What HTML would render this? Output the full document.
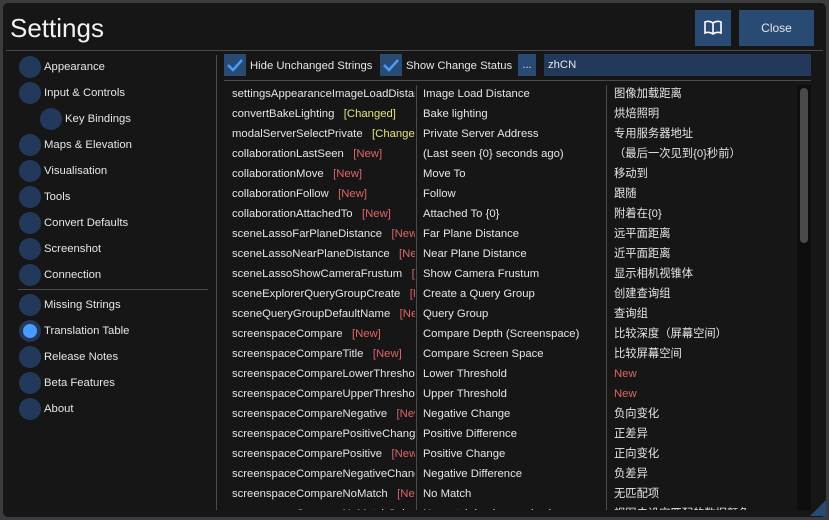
<!DOCTYPE html>
<html><head><meta charset="utf-8"><style>
*{margin:0;padding:0;box-sizing:border-box}
body{width:829px;height:520px;background:#3c3c3e;overflow:hidden;font-family:"Liberation Sans","Noto Sans CJK SC",sans-serif;color:#e6e6e6;font-size:11.3px;position:relative}
.win{position:absolute;left:3px;top:3px;width:823px;height:514px;background:#161617;border-radius:5px}
.title{position:absolute;left:10px;top:13px;font-size:26px;color:#f2f2f2}
.hl{position:absolute;left:6px;top:50px;width:817px;height:1px;background:#4a4a52}
.btn{position:absolute;background:#284a73;color:#e6e6e6;display:flex;align-items:center;justify-content:center;font-size:12px}
.side{position:absolute;left:19px;top:1px}
.it{position:absolute;left:0;height:22px;display:flex;align-items:center;white-space:nowrap}
.c{width:22px;height:22px;border-radius:50%;background:#23395b;margin-right:3px;flex:none}
.sel{background:#23395b;display:flex;align-items:center;justify-content:center}
.sel::after{content:"";width:14px;height:14px;border-radius:50%;background:#4a9bff}
.cb{position:absolute;top:54px;width:22px;height:22px;background:#284a73}
.row{position:absolute;height:20px;line-height:20px;white-space:nowrap;overflow:hidden}
.y{color:#e6e07a}.r{color:#e06565}
#t{position:absolute;left:0;top:0;width:829px;height:510px;overflow:hidden}
</style></head><body>
<div class="win"></div>
<div class="title">Settings</div>
<div class="hl"></div>
<div class="btn" style="left:695px;top:10px;width:36px;height:36px"><svg width="20" height="16" viewBox="0 0 20 16"><path d="M10 3C7 1 4 1 2 2v11c2-1 5-1 8 1 3-2 6-2 8-1V2c-2-1-5-1-8 1zM10 3v11" fill="none" stroke="#fff" stroke-width="1.6"/></svg></div>
<div class="btn" style="left:739px;top:10px;width:75px;height:36px">Close</div>
<div style="position:absolute;left:216px;top:55px;width:1px;height:455px;background:#4a4a52"></div>
<div style="position:absolute;left:18px;top:289px;width:190px;height:1px;background:#4a4a52"></div>
<div class="side">
<div class="it" style="top:55px"><span class="c"></span>Appearance</div>
<div class="it" style="top:81px"><span class="c"></span>Input &amp; Controls</div>
<div class="it" style="top:107px;left:21px"><span class="c"></span>Key Bindings</div>
<div class="it" style="top:133px"><span class="c"></span>Maps &amp; Elevation</div>
<div class="it" style="top:159px"><span class="c"></span>Visualisation</div>
<div class="it" style="top:185px"><span class="c"></span>Tools</div>
<div class="it" style="top:211px"><span class="c"></span>Convert Defaults</div>
<div class="it" style="top:237px"><span class="c"></span>Screenshot</div>
<div class="it" style="top:263px"><span class="c"></span>Connection</div>
<div class="it" style="top:293px"><span class="c"></span>Missing Strings</div>
<div class="it" style="top:319px"><span class="c sel"></span>Translation Table</div>
<div class="it" style="top:345px"><span class="c"></span>Release Notes</div>
<div class="it" style="top:371px"><span class="c"></span>Beta Features</div>
<div class="it" style="top:397px"><span class="c"></span>About</div>
</div>
<div class="cb" style="left:224px"><svg width="22" height="22"><path d="M4 11l5 5 9-10" fill="none" stroke="#4a9bff" stroke-width="2.5"/></svg></div>
<div class="row" style="left:250px;top:56px">Hide Unchanged Strings</div>
<div class="cb" style="left:380px"><svg width="22" height="22"><path d="M4 11l5 5 9-10" fill="none" stroke="#4a9bff" stroke-width="2.5"/></svg></div>
<div class="row" style="left:406px;top:56px">Show Change Status</div>
<div class="btn" style="left:518px;top:54px;width:18px;height:22px;font-size:11px">...</div>
<div style="position:absolute;left:544px;top:54px;width:267px;height:22px;background:#23395b;padding-left:4px;line-height:22px">zhCN</div>
<div style="position:absolute;left:224px;top:80px;width:587px;height:1px;background:#4a4a52"></div>
<div style="position:absolute;left:416px;top:85px;width:1px;height:425px;background:#4a4a52"></div>
<div style="position:absolute;left:606px;top:85px;width:1px;height:425px;background:#4a4a52"></div>
<div style="position:absolute;left:797px;top:85px;width:14px;height:425px;background:#0e0e0f"></div>
<div style="position:absolute;left:800px;top:88px;width:8px;height:155px;background:#4a4a4c;border-radius:4px"></div>
<div id="t"></div>
<div style="position:absolute;left:810px;top:500px;width:0;height:0;border-left:16px solid transparent;border-bottom:16px solid #284a73"></div>
<script>
var d=[["settingsAppearanceImageLoadDistance","","Image Load Distance","图像加载距离"],
["convertBakeLighting","y[Changed]","Bake lighting","烘焙照明"],
["modalServerSelectPrivate","y[Changed]","Private Server Address","专用服务器地址"],
["collaborationLastSeen","r[New]","(Last seen {0} seconds ago)","（最后一次见到{0}秒前）"],
["collaborationMove","r[New]","Move To","移动到"],
["collaborationFollow","r[New]","Follow","跟随"],
["collaborationAttachedTo","r[New]","Attached To {0}","附着在{0}"],
["sceneLassoFarPlaneDistance","r[New]","Far Plane Distance","远平面距离"],
["sceneLassoNearPlaneDistance","r[New]","Near Plane Distance","近平面距离"],
["sceneLassoShowCameraFrustum","r[New]","Show Camera Frustum","显示相机视锥体"],
["sceneExplorerQueryGroupCreate","r[New]","Create a Query Group","创建查询组"],
["sceneQueryGroupDefaultName","r[New]","Query Group","查询组"],
["screenspaceCompare","r[New]","Compare Depth (Screenspace)","比较深度（屏幕空间）"],
["screenspaceCompareTitle","r[New]","Compare Screen Space","比较屏幕空间"],
["screenspaceCompareLowerThreshold","r[New]","Lower Threshold","rNew"],
["screenspaceCompareUpperThreshold","r[New]","Upper Threshold","rNew"],
["screenspaceCompareNegative","r[New]","Negative Change","负向变化"],
["screenspaceComparePositiveChange","r[New]","Positive Difference","正差异"],
["screenspaceComparePositive","r[New]","Positive Change","正向变化"],
["screenspaceCompareNegativeChange","r[New]","Negative Difference","负差异"],
["screenspaceCompareNoMatch","r[New]","No Match","无匹配项"],
["screenspaceCompareNoMatchColor","r[New]","No match background color","视图未设定匹配的数据颜色"]];
var h="";
function sp(s){if(!s)return"";return s[0]=="y"||s[0]=="r"?'<span class="'+s[0]+'">'+s.slice(1)+'</span>':s}
d.forEach(function(r,i){var y=84+i*20;
h+='<div class="row" style="left:232px;top:'+y+'px;width:183px">'+r[0]+'&nbsp;&nbsp;&nbsp;'+sp(r[1])+'</div>';
h+='<div class="row" style="left:423px;top:'+y+'px;width:182px">'+r[2]+'</div>';
h+='<div class="row" style="left:614px;top:'+y+'px;width:182px">'+sp(r[3])+'</div>';});
document.getElementById("t").innerHTML=h;
</script>
</body></html>
